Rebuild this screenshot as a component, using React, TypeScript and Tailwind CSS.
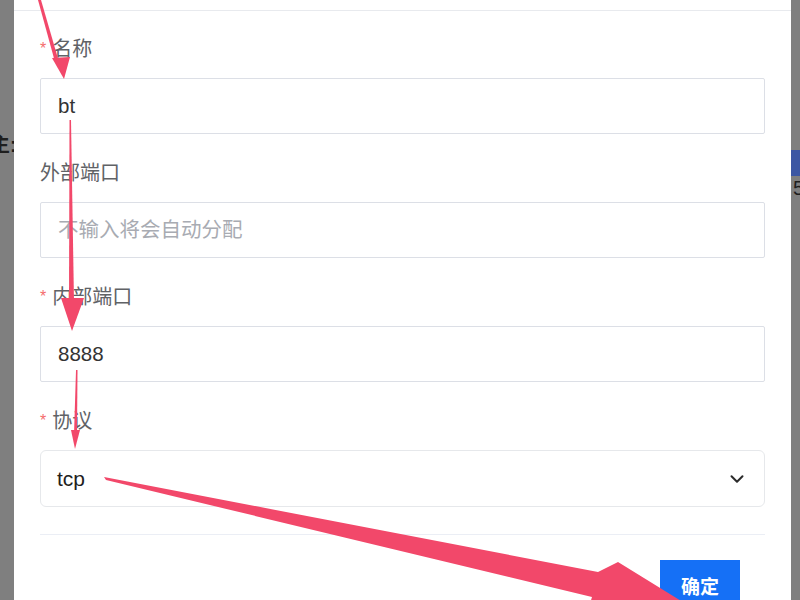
import { ChevronDown } from "lucide-react";

const font = { fontFamily: '"Liberation Sans", "Noto Sans CJK SC", sans-serif' };

function Label({ text, required }: { text: string; required?: boolean }) {
  return (
    <div className="flex h-[28px] items-center text-[20px] leading-[28px] text-[#606266]">
      {required && <span className="mr-[6px] text-[16px] text-[#f56c6c]">*</span>}
      <span>{text}</span>
    </div>
  );
}

function TextField({ value, placeholder }: { value?: string; placeholder?: string }) {
  return (
    <div className="flex h-[56px] items-center border-[1.5px] border-[#dcdfe6] rounded-[2px] px-[17px] text-[20.5px]">
      {value ? (
        <span className="text-[#333]">{value}</span>
      ) : (
        <span className="text-[#a8abb2]">{placeholder}</span>
      )}
    </div>
  );
}

function Arrows() {
  const c = "#f2486a";
  return (
    <svg className="pointer-events-none absolute inset-0" width="800" height="600" viewBox="0 0 800 600">
      {/* arrow 1 */}
      <polygon points="38,0 41,0 59,62 55,62" fill={c} />
      <polygon points="52,58 70,57 64,79" fill={c} />
      {/* arrow 2 */}
      <polygon points="69.5,120 71,120 74,302 69,302" fill={c} />
      <polygon points="61,298 84,298 72,331" fill={c} />
      {/* arrow 3 */}
      <polygon points="76,370 77.5,370 77,434 74,434" fill={c} />
      <polygon points="71,430 80,430 75,449" fill={c} />
      {/* arrow 4 */}
      <polygon points="104,477 598,572 618,562 712,620 585,620 592,597 106,480" fill={c} />
    </svg>
  );
}

export default function App() {
  return (
    <div className="relative flex h-[600px] w-[800px] overflow-hidden bg-[#7f7f7f]" style={font}>
      {/* left page behind overlay */}
      <div className="w-[14px] shrink-0 overflow-hidden">
        <div className="ml-[-10px] mt-[130px] whitespace-nowrap text-[20px] font-bold text-[#1e1e1e]">主:</div>
      </div>

      {/* modal */}
      <div className="flex flex-1 flex-col overflow-hidden bg-white">
        <div className="h-[11px] shrink-0 border-b border-[#e8eaee]" />
        <div className="flex shrink-0 flex-col px-[26px] pt-[24px]">
          <div className="mb-[25px] flex flex-col gap-[15px]">
            <Label text="名称" required />
            <TextField value="bt" />
          </div>
          <div className="mb-[25px] flex flex-col gap-[15px]">
            <Label text="外部端口" />
            <TextField placeholder="不输入将会自动分配" />
          </div>
          <div className="mb-[25px] flex flex-col gap-[15px]">
            <Label text="内部端口" required />
            <TextField value="8888" />
          </div>
          <div className="flex flex-col gap-[15px]">
            <Label text="协议" required />
            <div className="flex h-[57px] items-center justify-between rounded-[6px] border-[1.5px] border-[#e6e8eb] pl-[16px] pr-[16px]">
              <span className="text-[21px] text-[#1f1f1f]">tcp</span>
              <ChevronDown size={22} strokeWidth={2.2} className="text-[#2b2b2b]" />
            </div>
          </div>
          <div className="mt-[27px] border-t border-[#ebeef5]" />
          <div className="flex justify-end pr-[25px] pt-[25px]">
            <button className="flex h-[56px] w-[80px] items-center justify-center bg-[#1570f6] text-[19px] font-bold text-white">
              确定
            </button>
          </div>
        </div>
      </div>

      {/* right page behind overlay */}
      <div className="w-[9px] shrink-0 overflow-hidden">
        <div className="mt-[150px] h-[26px] bg-[#3c57a3]" />
        <div className="ml-[2px] text-[20px] leading-[24px] text-[#1e1e1e]">5</div>
      </div>

      <Arrows />
    </div>
  );
}
